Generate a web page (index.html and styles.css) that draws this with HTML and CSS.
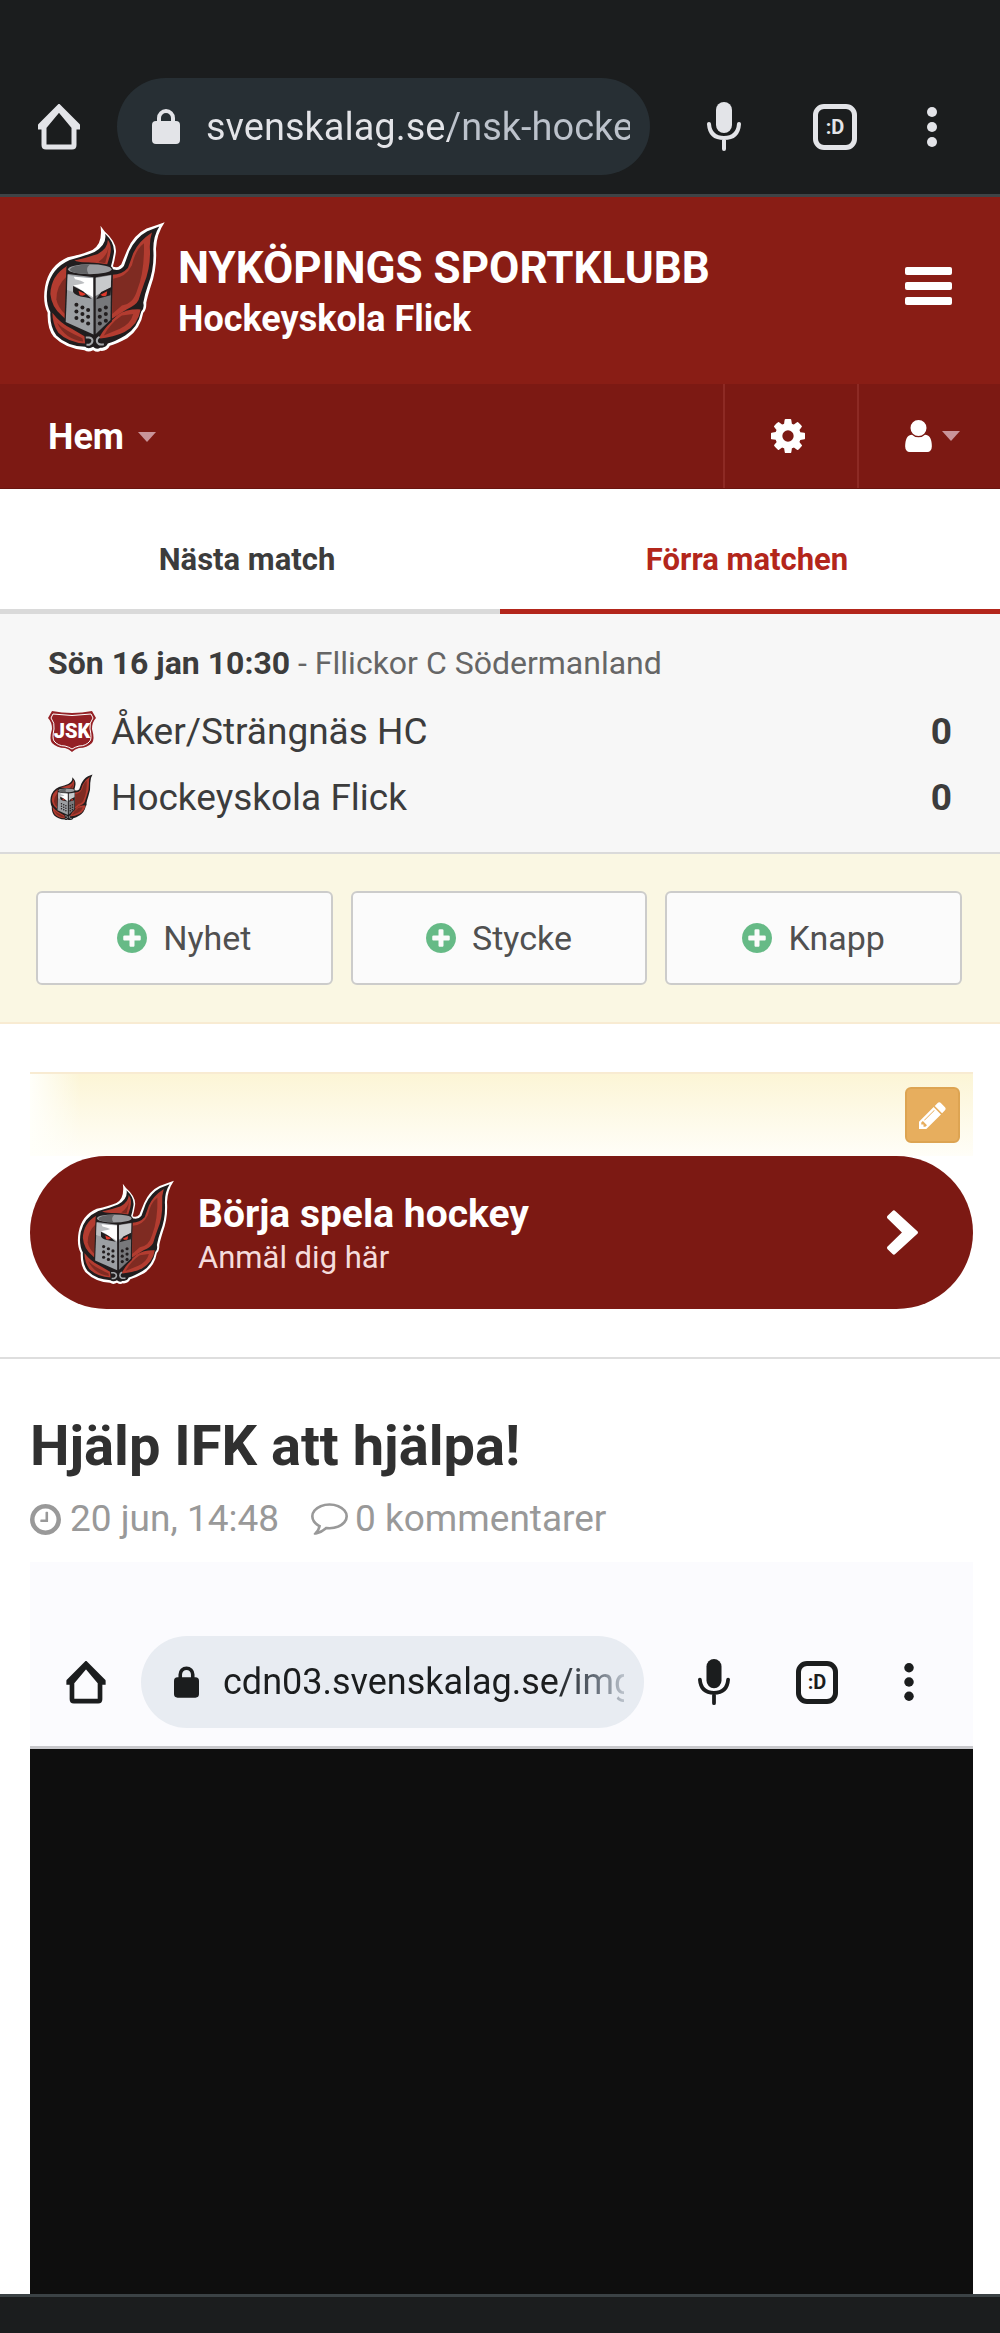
FILE: index.html
```html
<!DOCTYPE html>
<html lang="sv">
<head>
  <meta charset="UTF-8" />
  <meta name="viewport" content="width=device-width, initial-scale=1" />
  <title>Hockeyskola Flick - Nyköpings Sportklubb</title>
  <link rel="stylesheet" href="styles.css">
</head>
<body>

<!-- shared icons -->
<svg class="sprite" aria-hidden="true">
  <symbol id="logo" viewBox="40 15 368 400">
    <path class="outline" fill="#fff" d="M212 32 L224 48 Q262 82 258 112 Q254 138 249 154 Q264 160 274 148 L292 104 Q312 58 350 40 Q380 30 404 21 Q380 56 378 100 Q382 160 362 214 Q352 246 349 262 Q350 284 340 292 Q332 340 292 368 Q262 384 240 391 Q232 408 212 406 Q202 412 190 404 Q176 412 164 404 Q108 400 72 364 Q52 340 54 292 Q38 262 46 214 Q58 150 114 126 Q160 116 188 104 Q220 86 212 32z"/>
    <path fill="#211d1e" d="M226 56 Q256 84 252 114 Q248 138 242 158 Q266 172 282 152 L298 108 Q318 66 352 48 L388 34 Q370 62 370 102 Q374 160 354 210 Q344 238 340 262 Q344 280 334 288 Q324 336 286 360 Q256 378 234 384 Q228 398 212 396 Q200 404 190 394 Q176 402 166 394 Q112 392 80 360 Q60 334 62 290 Q46 260 54 214 Q66 158 120 134 Q166 122 194 110 Q232 88 226 56z"/>
    <path fill="#b33c30" d="M234 74 Q248 92 240 122 L232 148 L168 142 Q144 140 134 136 Q170 128 204 116 Q234 100 234 74z"/>
    <path fill="#7f2b22" d="M236 96 Q234 116 226 144 L206 140 Q232 122 236 96z"/>
    <path fill="#b33c30" d="M366 52 Q358 76 360 104 Q362 158 342 206 Q332 234 326 254 Q318 270 290 282 L246 310 L248 178 Q276 178 294 158 L310 114 Q326 78 366 52z"/>
    <path fill="#7f2b22" d="M342 84 Q316 104 306 150 Q288 186 250 190 L247 296 L276 270 Q310 266 322 224 Q344 170 342 84z"/>
    <path fill="#b33c30" d="M112 152 Q64 180 62 236 Q66 276 96 300 L106 310 L110 230z"/>
    <path fill="#7f2b22" d="M112 182 Q80 210 80 252 Q84 276 106 296z"/>
    <path fill="#b33c30" d="M68 292 Q90 322 126 340 L164 362 L166 384 Q116 382 86 352 Q68 326 68 292z"/>
    <path fill="#7f2b22" d="M82 322 Q106 346 158 368 L160 378 Q106 372 82 322z"/>
    <path fill="#b33c30" d="M332 282 Q326 326 284 350 Q252 366 206 370 Q230 326 264 298 Q292 280 332 282z"/>
    <path fill="#7f2b22" d="M310 296 Q302 326 270 340 L222 360 Q242 322 276 300z"/>
    <path fill="#211d1e" d="M110 156 Q114 144 176 142 Q248 144 249 162 L246 318 L194 366 L104 326z"/>
    <path fill="#9c9fa3" d="M114 176 L192 186 L193 358 L108 320z"/>
    <path fill="#bcbec1" d="M114 178 Q150 188 190 188 L190 250 L112 224z"/>
    <path fill="#fff" d="M132 184 L190 189 L190 246 Q180 238 164 232 Q146 216 130 210 Q160 206 164 202 Q156 196 136 192z"/>
    <path fill="#77787b" d="M197 186 L244 178 L242 314 L197 356z"/>
    <path fill="#c8cacc" d="M197 188 L244 180 L243 216 L197 242z"/>
    <ellipse cx="180" cy="162" rx="65" ry="15" fill="#9a9c9f"/>
    <path fill="#636466" d="M120 164 Q124 149 180 148 Q166 160 176 176 Q128 176 120 164z"/>
    <path fill="#211d1e" d="M130 212 L160 228 L186 250 L166 246 Q136 242 130 230z M244 216 L214 230 L199 252 Q220 246 242 240z"/>
    <path fill="#e0392b" d="M146 226 L168 236 Q162 244 150 240z M232 228 L212 238 Q222 246 230 240z"/>
    <path fill="#211d1e" d="M191 184h6v178l-3 3-3-3z"/>
    <g fill="#211d1e">
      <circle cx="140" cy="268" r="6"/><circle cx="140" cy="288" r="6"/><circle cx="140" cy="308" r="6"/>
      <circle cx="158" cy="276" r="6"/><circle cx="158" cy="296" r="6"/><circle cx="158" cy="316" r="6"/>
      <circle cx="175" cy="284" r="6"/><circle cx="175" cy="304" r="6"/><circle cx="175" cy="324" r="6"/>
      <circle cx="210" cy="284" r="6"/><circle cx="210" cy="304" r="6"/><circle cx="210" cy="324" r="6"/>
      <circle cx="228" cy="276" r="6"/><circle cx="228" cy="296" r="6"/><circle cx="228" cy="316" r="6"/>
    </g>
    <path fill="none" stroke="#211d1e" stroke-width="16" d="M168 366h10q10 2 10 10t-10 12h-8M218 388q-16 2-18-10 0-8 6-14"/>
    <path fill="none" stroke="#a5a7aa" stroke-width="6" d="M168 366h10q10 2 10 10t-10 12h-8M222 386q-20 4-21-10 0-8 8-12"/>
  </symbol>
  <symbol id="home" viewBox="0 0 44 46">
    <path fill="none" stroke="currentColor" stroke-width="5" d="M1 23h6L22 5l15 18h6M7 20v21q0 2 2 2h26q2 0 2-2V20M3 22 22 3l19 19"/>
  </symbol>
  <symbol id="lock" viewBox="0 0 28 36">
    <path fill="none" stroke="currentColor" stroke-width="4" d="M7 14V9a7 7 0 0 1 14 0v5"/>
    <rect x="0" y="12" width="28" height="23" rx="4" fill="currentColor"/>
  </symbol>
  <symbol id="mic" viewBox="0 0 34 50">
    <rect x="9" y="0" width="16" height="31" rx="8" fill="currentColor"/>
    <path fill="none" stroke="currentColor" stroke-width="4" stroke-linecap="round" d="M2 22q1 14 15 14t15-14M17 37v10"/>
  </symbol>
  <symbol id="dots" viewBox="0 0 10 40">
    <circle cx="5" cy="5" r="5" fill="currentColor"/><circle cx="5" cy="20" r="5" fill="currentColor"/><circle cx="5" cy="35" r="5" fill="currentColor"/>
  </symbol>
  <symbol id="plus" viewBox="128 128 1536 1536">
    <path fill="currentColor" d="M1344 960v-128q0-26-19-45t-45-19h-256v-256q0-26-19-45t-45-19h-128q-26 0-45 19t-19 45v256h-256q-26 0-45 19t-19 45v128q0 26 19 45t45 19h256v256q0 26 19 45t45 19h128q26 0 45-19t19-45v-256h256q26 0 45-19t19-45zm320-64q0 209-103 385.500t-279.500 279.500-385.500 103-385.500-103-279.500-279.500-103-385.500 103-385.500 279.500-279.500 385.500-103 385.500 103 279.500 279.500 103 385.500z"/>
  </symbol>
</svg>

<header class="browser-bar">
  <button class="bar-btn" aria-label="Startsida"><svg class="ic-home"><use href="#home"/></svg></button>
  <label class="address">
    <svg class="ic-lock"><use href="#lock"/></svg>
    <input type="text" aria-label="Adress" value="svenskalag.se/nsk-hockeyskola" />
  </label>
  <button class="bar-btn" aria-label="Röstsök"><svg class="ic-mic"><use href="#mic"/></svg></button>
  <button class="bar-btn tab-count" aria-label="Flikar">:D</button>
  <button class="bar-btn" aria-label="Mer"><svg class="ic-dots"><use href="#dots"/></svg></button>
</header>

<div class="site-header">
  <svg class="site-logo"><use href="#logo"/></svg>
  <div class="site-name">
    <div class="club">NYKÖPINGS SPORTKLUBB</div>
    <div class="team">Hockeyskola Flick</div>
  </div>
  <button class="menu-btn" aria-label="Meny"><span></span><span></span><span></span></button>
</div>

<nav class="site-nav">
  <a class="nav-home" href="#">Hem <i class="caret"></i></a>
  <a class="nav-cell nav-gear" href="#" aria-label="Inställningar">
    <svg viewBox="128 128 1536 1536"><path fill="currentColor" d="M1152 896q0-106-75-181t-181-75-181 75-75 181 75 181 181 75 181-75 75-181zm512-109v222q0 12-8 23t-20 13l-185 28q-19 54-39 91 35 50 107 138 10 12 10 25t-9 23q-27 37-99 108t-94 71q-12 0-26-9l-138-108q-44 23-91 38-16 136-29 186-7 28-36 28h-222q-14 0-24.500-8.500t-11.500-21.500l-28-184q-49-16-90-37l-141 107q-10 9-25 9-14 0-25-11-126-114-165-168-7-10-7-23 0-12 8-23 15-21 51-66.500t54-70.500q-27-50-41-99l-183-27q-13-2-21-12.500t-8-23.500v-222q0-12 8-23t19-13l186-28q14-46 39-92-40-57-107-138-10-12-10-24 0-10 9-23 26-36 98.500-107.500t94.500-71.500q13 0 26 10l138 107q44-23 91-38 16-136 29-186 7-28 36-28h222q14 0 24.500 8.500t11.500 21.500l28 184q49 16 90 37l142-107q9-9 24-9 13 0 25 10 129 119 165 170 7 8 7 22 0 12-8 23-15 21-51 66.500t-54 70.500q26 50 41 98l183 28q13 2 21 12.500t8 23.500z"/></svg>
  </a>
  <a class="nav-cell nav-user" href="#" aria-label="Konto">
    <svg viewBox="256 128 1280 1536"><path fill="currentColor" d="M1536 1399q0 109-62.500 187t-150.500 78h-854q-88 0-150.500-78t-62.500-187q0-85 8.500-160.500t31.500-152 58.500-131 94-89 134.500-34.500q131 128 313 128t313-128q76 0 134.500 34.500t94 89 58.500 131 31.500 152 8.500 160.500zm-256-887q0 159-112.500 271.500t-271.500 112.500-271.500-112.500-112.500-271.500 112.500-271.500 271.500-112.500 271.500 112.500 112.500 271.500z"/></svg>
    <i class="caret"></i>
  </a>
</nav>

<main>
  <div class="match-tabs">
    <button>Nästa match</button>
    <button class="active">Förra matchen</button>
  </div>

  <section class="match">
    <p class="match-info"><b>Sön 16 jan 10:30</b> - Fllickor C Södermanland</p>
    <table>
      <tr>
        <td class="badge">
          <svg viewBox="0 0 48 42">
            <path fill="#942025" d="M4 1q20 4 40 0l4 7q-4 4-4 11 3 10 0 14-5 5-13 5-4 1-7 4-3-3-7-4-8 0-13-5-3-4 0-14 0-7-4-11z"/>
            <path fill="none" stroke="#fff" d="M5 4q19 3 38 0l2 4q-4 5-3 11 2 9 0 12-4 5-11 5-4 1-7 3-3-2-7-3-7 0-11-5-2-3 0-12 1-6-3-11z"/>
            <text x="24" y="28" text-anchor="middle" font-family="Roboto, sans-serif" font-size="20" font-weight="900" fill="#fff">JSK</text>
          </svg>
        </td>
        <td>Åker/Strängnäs HC</td>
        <td class="score">0</td>
      </tr>
      <tr>
        <td class="badge small-logo"><svg><use href="#logo"/></svg></td>
        <td>Hockeyskola Flick</td>
        <td class="score">0</td>
      </tr>
    </table>
  </section>

  <div class="admin-bar">
    <button><svg><use href="#plus"/></svg>Nyhet</button>
    <button><svg><use href="#plus"/></svg>Stycke</button>
    <button><svg><use href="#plus"/></svg>Knapp</button>
  </div>

  <section class="signup">
    <div class="edit-strip">
      <button aria-label="Redigera">
        <svg viewBox="128 128 1536 1536"><path fill="currentColor" d="M491 1536l91-91-235-235-91 91v107h128v128h107zm523-928q0-22-22-22-10 0-17 7l-542 542q-7 7-7 17 0 22 22 22 10 0 17-7l542-542q7-7 7-17zm-54-192l416 416-832 832h-416v-416zm683 96q0 53-37 90l-166 166-416-416 166-165q36-38 90-38 53 0 91 38l235 234q37 39 37 91z"/></svg>
      </button>
    </div>
    <a class="cta" href="#">
      <svg class="cta-logo"><use href="#logo"/></svg>
      <span class="cta-text">
        <b>Börja spela hockey</b>
        <span>Anmäl dig här</span>
      </span>
      <svg class="chevron" viewBox="346 154 1037 1484"><path fill="currentColor" d="M1363 941l-742 678q-19 19-45 19t-45-19l-166-166q-19-19-19-45t19-45l480-467-480-467q-19-19-19-45t19-45l166-166q19-19 45-19t45 19l742 678q19 19 19 45t-19 45z"/></svg>
    </a>
  </section>

  <article>
    <h1>Hjälp IFK att hjälpa!</h1>
    <div class="meta">
      <svg class="clock" viewBox="128 128 1536 1536"><path fill="currentColor" d="M1024 544v448q0 14-9 23t-23 9h-320q-14 0-23-9t-9-23v-64q0-14 9-23t23-9h224v-352q0-14 9-23t23-9h64q14 0 23 9t9 23zm416 352q0-148-73-273t-198-198-273-73-273 73-198 198-73 273 73 273 198 198 273 73 273-73 198-198 73-273zm224 0q0 209-103 385.500t-279.500 279.500-385.500 103-385.500-103-279.500-279.500-103-385.500 103-385.500 279.500-279.500 385.500-103 385.500 103 279.500 279.500 103 385.500z"/></svg>
      <span>20 jun, 14:48</span>
      <svg class="bubble" viewBox="0 256 1792 1536"><path fill="currentColor" d="M896 384q-204 0-381.500 69.500t-282 187.500-104.500 255q0 112 71.500 213.500t201.500 175.500l87 50-27 96q-24 91-70 172 152-63 275-171l43-38 57 6q69 8 130 8 204 0 381.500-69.500t282-187.500 104.500-255-104.500-255-282-187.500-381.500-69.500zm896 512q0 174-120 321.500t-326 233-450 85.500q-70 0-145-8-198 175-460 242-49 14-114 22h-5q-15 0-27-10.500t-16-27.500v-1q-3-4-.5-12t2-10 4.500-9.500l6-9 7-8.500 8-9q7-8 31-34.500t34.500-38 31-39.500 32.500-51 27-59 26-76q-157-89-247.500-220t-90.500-281q0-174 120-321.500t326-233 450-85.500 450 85.500 326 233 120 321.500z"/></svg>
      <a href="#">0 kommentarer</a>
    </div>
    <div class="screenshot">
      <div class="browser-bar light">
        <button class="bar-btn" aria-label="Startsida"><svg class="ic-home"><use href="#home"/></svg></button>
        <label class="address">
          <svg class="ic-lock"><use href="#lock"/></svg>
          <input type="text" aria-label="Adress" value="cdn03.svenskalag.se/img" />
        </label>
        <button class="bar-btn" aria-label="Röstsök"><svg class="ic-mic"><use href="#mic"/></svg></button>
        <button class="bar-btn tab-count" aria-label="Flikar">:D</button>
        <button class="bar-btn" aria-label="Mer"><svg class="ic-dots"><use href="#dots"/></svg></button>
      </div>
    </div>
  </article>
</main>

<div class="system-bar"></div>

</body>
</html>
```
FILE: styles.css
```css
* {
  box-sizing: border-box;
}

body {
  margin: 0;
  min-height: 100vh;
  display: flex;
  flex-direction: column;
  font-family: Roboto, sans-serif;
  color: #3c3c3c;
  background: #fff;
}

button {
  padding: 0;
  border: none;
  background: none;
  font-family: inherit;
  color: inherit;
  cursor: pointer;
}

a {
  color: inherit;
  text-decoration: none;
}

svg {
  display: block;
  flex: none;
}

.sprite {
  position: absolute;
  width: 0;
  height: 0;
}

/* browser chrome */
.browser-bar {
  display: flex;
  align-items: center;
  padding: 78px 63px 19px 37px;
  border-bottom: 3px solid #3e4346;
  background: #1b1d1e;
  color: #e3e4e8;
}

.bar-btn:first-child {
  margin-right: 36px;
}

.bar-btn:nth-child(3) {
  margin-left: 57px;
}

.browser-bar .tab-count {
  width: 44px;
  height: 46px;
  margin: 0 70px 0 72px;
  border: 5px solid currentColor;
  border-radius: 11px;
  font-size: 20px;
  line-height: 20px;
  font-weight: 700;
}

.address {
  flex: 1;
  min-width: 0;
  height: 97px;
  display: flex;
  align-items: center;
  gap: 26px;
  padding: 0 20px 0 35px;
  border-radius: 50px;
  background: #272f34;
}

.address input {
  flex: 1;
  min-width: 0;
  padding: 0;
  border: none;
  outline: none;
  font-family: inherit;
  font-size: 38px;
  color: transparent;
  background: linear-gradient(90deg, #e3e4e8 244px, #bcc2cb 244px);
  -webkit-background-clip: text;
  background-clip: text;
}

.ic-home {
  width: 44px;
  height: 46px;
}

.ic-lock {
  width: 28px;
  height: 36px;
}

.ic-mic {
  width: 34px;
  height: 50px;
}

.ic-dots {
  width: 10px;
  height: 40px;
}

/* club header */
.site-header {
  display: flex;
  align-items: flex-start;
  padding: 23px 48px 30px 43px;
  background: #891d15;
  color: #fff;
}

.site-logo {
  width: 123px;
  height: 134px;
}

.site-name {
  flex: 1;
  padding: 18px 0 0 12px;
  font-weight: 700;
}

.club {
  font-size: 44px;
  line-height: 60px;
}

.team {
  font-size: 36px;
  line-height: 42px;
}

.menu-btn {
  display: flex;
  flex-direction: column;
  gap: 7px;
  margin-top: 47px;
}

.menu-btn span {
  width: 47px;
  height: 8px;
  border-radius: 2px;
  background: #fff;
}

.site-nav {
  display: flex;
  height: 105px;
  border-bottom: 1px solid #6a1510;
  background: #7c1913;
  color: #fff;
}

.nav-home {
  flex: 1;
  display: flex;
  align-items: center;
  gap: 14px;
  padding: 2px 0 0 48px;
  font-size: 36px;
  font-weight: 700;
}

.caret {
  border: 9px solid transparent;
  border-top: 10px solid #c9949a;
  border-bottom: none;
}

.nav-cell {
  display: flex;
  align-items: center;
  justify-content: center;
  gap: 10px;
  border-left: 2px solid #8d2a24;
}

.nav-gear {
  width: 134px;
  padding-right: 6px;
}

.nav-gear svg {
  width: 34px;
  height: 34px;
}

.nav-user {
  width: 143px;
  padding-left: 6px;
}

.nav-user svg {
  width: 27px;
  height: 32px;
}

/* match box */
.match-tabs {
  display: flex;
}

.match-tabs button {
  flex: 1;
  padding: 60px 6px 38px 0;
  border-bottom: 5px solid #dadada;
  font-size: 31px;
  line-height: 22px;
  font-weight: 700;
}

.match-tabs .active {
  border-color: #b3261b;
  color: #b3261b;
}

.match {
  padding: 26px 48px 22px;
  border-bottom: 2px solid #dadada;
  background: #f7f7f7;
}

.match-info {
  margin: 0 0 12px;
  font-size: 32px;
  line-height: 46px;
  color: #666;
}

.match-info b {
  color: #3c3c3c;
}

.match table {
  width: 100%;
  border-collapse: collapse;
  font-size: 37px;
}

.match td {
  height: 66px;
  padding: 0;
}

.match .badge {
  width: 63px;
}

.badge svg {
  width: 48px;
  height: 42px;
}

.small-logo svg {
  height: 50px;
}

/* no white rim on the light background */
.small-logo svg {
  --rim: transparent;
}

.outline {
  fill: var(--rim, #fff);
}

.match .score {
  text-align: right;
  font-weight: 700;
}

/* admin buttons */
.admin-bar {
  display: flex;
  gap: 18px;
  padding: 37px 38px 37px 36px;
  border-bottom: 2px solid #f8ebd2;
  background: #faf7e3;
}

.admin-bar button {
  flex: 1;
  height: 94px;
  display: flex;
  align-items: center;
  justify-content: center;
  gap: 16px;
  border: 2px solid #cccccb;
  border-radius: 6px;
  background: #fbfbfb;
  font-size: 34px;
  color: #505050;
}

.admin-bar svg {
  width: 30px;
  height: 30px;
  color: #66ba86;
}

.signup {
  padding: 48px 27px 48px 30px;
  border-bottom: 2px solid #dedede;
}

.edit-strip {
  display: flex;
  justify-content: flex-end;
  padding: 13px;
  border-top: 2px solid #f8ebd2;
  background:
    linear-gradient(90deg, #fffffa, transparent 50px),
    linear-gradient(#fcf5d6, #fffef8);
}

.edit-strip button {
  width: 55px;
  height: 56px;
  display: grid;
  place-items: center;
  border: 2px solid #dda452;
  border-radius: 6px;
  background: #e7ae5e;
  color: #fff;
}

.edit-strip svg {
  width: 27px;
  height: 27px;
}

.cta {
  display: flex;
  align-items: center;
  padding: 23px 55px 23px 47px;
  border-radius: 78px;
  background: #7c1913;
  color: #fff;
}

.cta-logo {
  width: 98px;
  height: 107px;
}

.cta-text {
  flex: 1;
  display: flex;
  flex-direction: column;
  padding: 6px 0 0 23px;
  font-size: 31px;
  line-height: 43px;
}

.cta-text b {
  font-size: 39px;
}

.cta-text span {
  color: #f5dcdc;
}

.chevron {
  width: 31px;
  height: 45px;
}

/* news */
main {
  flex: 1;
  display: flex;
  flex-direction: column;
}

article {
  flex: 1;
  display: flex;
  flex-direction: column;
  padding: 52px 27px 0 30px;
}

h1 {
  margin: 0;
  font-size: 56px;
  line-height: 70px;
  font-weight: 700;
  color: #303030;
}

.meta {
  display: flex;
  align-items: center;
  margin: 15px 0 20px;
  font-size: 37px;
  line-height: 46px;
  color: #999;
}

.clock {
  width: 31px;
  height: 31px;
  margin-right: 9px;
}

.bubble {
  width: 37px;
  height: 32px;
  margin: 0 7px 0 32px;
}

.screenshot {
  flex: 1;
  background: #0e0e0e;
}

.light {
  padding: 74px 59px 18px 35px;
  border-color: #c8c8cc;
  background: #fbfbfe;
  color: #1b1d1e;
}

.light .bar-btn:first-child {
  margin-right: 34px;
}

.light .bar-btn:nth-child(3) {
  margin-left: 54px;
}

.light .tab-count {
  width: 42px;
  height: 43px;
  margin: 0 66px;
}

.light .address {
  height: 92px;
  gap: 24px;
  padding-left: 33px;
  background: #e8ecf2;
}

.light .address input {
  font-size: 36px;
  background: linear-gradient(90deg, #1b1d1e 330px, #5c6570 370px, #b9c0c9 400px);
  -webkit-background-clip: text;
  background-clip: text;
}

.light .ic-home {
  width: 42px;
  height: 43px;
}

.light .ic-lock {
  width: 25px;
  height: 33px;
}

.light .ic-mic {
  width: 32px;
  height: 47px;
}

.light .ic-dots {
  height: 38px;
}

.system-bar {
  height: 39px;
  border-top: 3px solid #3b4245;
  background: #1b1d1e;
}
```
